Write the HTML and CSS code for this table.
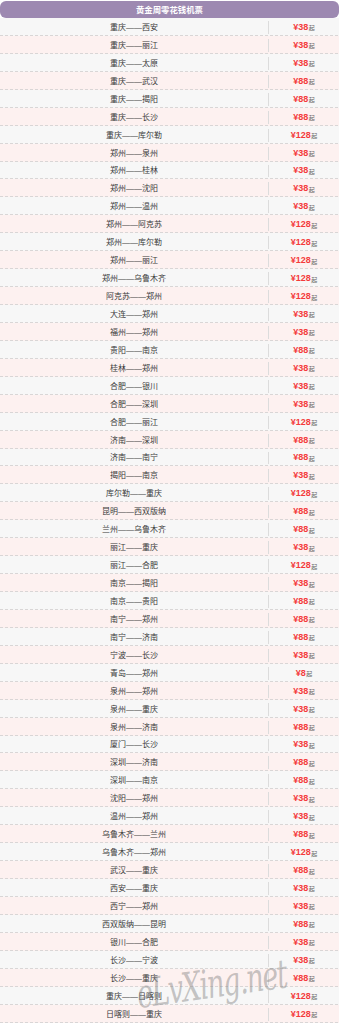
FILE: index.html
```html
<!DOCTYPE html>
<html lang="zh-CN">
<head>
<meta charset="utf-8">
<title>黄金周零花钱机票</title>
<link rel="stylesheet" href="styles.css">
</head>
<body>
<div class="board">
  <div class="title">黄金周零花钱机票</div>
  <ul class="list">
    <li class="row"><span class="route">重庆——西安</span><span class="price"><b>¥38</b><small>起</small></span></li>
    <li class="row"><span class="route">重庆——丽江</span><span class="price"><b>¥38</b><small>起</small></span></li>
    <li class="row"><span class="route">重庆——太原</span><span class="price"><b>¥38</b><small>起</small></span></li>
    <li class="row"><span class="route">重庆——武汉</span><span class="price"><b>¥88</b><small>起</small></span></li>
    <li class="row"><span class="route">重庆——揭阳</span><span class="price"><b>¥88</b><small>起</small></span></li>
    <li class="row"><span class="route">重庆——长沙</span><span class="price"><b>¥88</b><small>起</small></span></li>
    <li class="row"><span class="route">重庆——库尔勒</span><span class="price"><b>¥128</b><small>起</small></span></li>
    <li class="row"><span class="route">郑州——泉州</span><span class="price"><b>¥38</b><small>起</small></span></li>
    <li class="row"><span class="route">郑州——桂林</span><span class="price"><b>¥38</b><small>起</small></span></li>
    <li class="row"><span class="route">郑州——沈阳</span><span class="price"><b>¥38</b><small>起</small></span></li>
    <li class="row"><span class="route">郑州——温州</span><span class="price"><b>¥38</b><small>起</small></span></li>
    <li class="row"><span class="route">郑州——阿克苏</span><span class="price"><b>¥128</b><small>起</small></span></li>
    <li class="row"><span class="route">郑州——库尔勒</span><span class="price"><b>¥128</b><small>起</small></span></li>
    <li class="row"><span class="route">郑州——丽江</span><span class="price"><b>¥128</b><small>起</small></span></li>
    <li class="row"><span class="route">郑州——乌鲁木齐</span><span class="price"><b>¥128</b><small>起</small></span></li>
    <li class="row"><span class="route">阿克苏——郑州</span><span class="price"><b>¥128</b><small>起</small></span></li>
    <li class="row"><span class="route">大连——郑州</span><span class="price"><b>¥38</b><small>起</small></span></li>
    <li class="row"><span class="route">福州——郑州</span><span class="price"><b>¥38</b><small>起</small></span></li>
    <li class="row"><span class="route">贵阳——南京</span><span class="price"><b>¥88</b><small>起</small></span></li>
    <li class="row"><span class="route">桂林——郑州</span><span class="price"><b>¥38</b><small>起</small></span></li>
    <li class="row"><span class="route">合肥——银川</span><span class="price"><b>¥38</b><small>起</small></span></li>
    <li class="row"><span class="route">合肥——深圳</span><span class="price"><b>¥38</b><small>起</small></span></li>
    <li class="row"><span class="route">合肥——丽江</span><span class="price"><b>¥128</b><small>起</small></span></li>
    <li class="row"><span class="route">济南——深圳</span><span class="price"><b>¥88</b><small>起</small></span></li>
    <li class="row"><span class="route">济南——南宁</span><span class="price"><b>¥88</b><small>起</small></span></li>
    <li class="row"><span class="route">揭阳——南京</span><span class="price"><b>¥38</b><small>起</small></span></li>
    <li class="row"><span class="route">库尔勒——重庆</span><span class="price"><b>¥128</b><small>起</small></span></li>
    <li class="row"><span class="route">昆明——西双版纳</span><span class="price"><b>¥88</b><small>起</small></span></li>
    <li class="row"><span class="route">兰州——乌鲁木齐</span><span class="price"><b>¥88</b><small>起</small></span></li>
    <li class="row"><span class="route">丽江——重庆</span><span class="price"><b>¥38</b><small>起</small></span></li>
    <li class="row"><span class="route">丽江——合肥</span><span class="price"><b>¥128</b><small>起</small></span></li>
    <li class="row"><span class="route">南京——揭阳</span><span class="price"><b>¥38</b><small>起</small></span></li>
    <li class="row"><span class="route">南京——贵阳</span><span class="price"><b>¥88</b><small>起</small></span></li>
    <li class="row"><span class="route">南宁——郑州</span><span class="price"><b>¥88</b><small>起</small></span></li>
    <li class="row"><span class="route">南宁——济南</span><span class="price"><b>¥88</b><small>起</small></span></li>
    <li class="row"><span class="route">宁波——长沙</span><span class="price"><b>¥38</b><small>起</small></span></li>
    <li class="row"><span class="route">青岛——郑州</span><span class="price"><b>¥8</b><small>起</small></span></li>
    <li class="row"><span class="route">泉州——郑州</span><span class="price"><b>¥38</b><small>起</small></span></li>
    <li class="row"><span class="route">泉州——重庆</span><span class="price"><b>¥38</b><small>起</small></span></li>
    <li class="row"><span class="route">泉州——济南</span><span class="price"><b>¥88</b><small>起</small></span></li>
    <li class="row"><span class="route">厦门——长沙</span><span class="price"><b>¥38</b><small>起</small></span></li>
    <li class="row"><span class="route">深圳——济南</span><span class="price"><b>¥88</b><small>起</small></span></li>
    <li class="row"><span class="route">深圳——南京</span><span class="price"><b>¥88</b><small>起</small></span></li>
    <li class="row"><span class="route">沈阳——郑州</span><span class="price"><b>¥38</b><small>起</small></span></li>
    <li class="row"><span class="route">温州——郑州</span><span class="price"><b>¥38</b><small>起</small></span></li>
    <li class="row"><span class="route">乌鲁木齐——兰州</span><span class="price"><b>¥88</b><small>起</small></span></li>
    <li class="row"><span class="route">乌鲁木齐——郑州</span><span class="price"><b>¥128</b><small>起</small></span></li>
    <li class="row"><span class="route">武汉——重庆</span><span class="price"><b>¥88</b><small>起</small></span></li>
    <li class="row"><span class="route">西安——重庆</span><span class="price"><b>¥38</b><small>起</small></span></li>
    <li class="row"><span class="route">西宁——郑州</span><span class="price"><b>¥38</b><small>起</small></span></li>
    <li class="row"><span class="route">西双版纳——昆明</span><span class="price"><b>¥88</b><small>起</small></span></li>
    <li class="row"><span class="route">银川——合肥</span><span class="price"><b>¥38</b><small>起</small></span></li>
    <li class="row"><span class="route">长沙——宁波</span><span class="price"><b>¥38</b><small>起</small></span></li>
    <li class="row"><span class="route">长沙——重庆</span><span class="price"><b>¥88</b><small>起</small></span></li>
    <li class="row"><span class="route">重庆——日喀则</span><span class="price"><b>¥128</b><small>起</small></span></li>
    <li class="row"><span class="route">日喀则——重庆</span><span class="price"><b>¥128</b><small>起</small></span></li>
  </ul>
  <div class="watermark">eLvXing.net</div>
</div>
</body>
</html>
```

FILE: styles.css
```css
html, body {
  margin: 0;
  padding: 0;
  background: #ffffff;
}

.board {
  position: relative;
  width: 339px;
  overflow: hidden;
  font-family: "Noto Sans CJK SC", "Noto Sans", sans-serif;
}

.title {
  height: 17px;
  margin-top: 1px;
  line-height: 17px;
  background: #9d89b1;
  border-radius: 6px;
  color: #ffffff;
  font-size: 8.4px;
  font-weight: bold;
  text-align: center;
}

.list {
  list-style: none;
  margin: 0;
  padding: 0;
}

.row {
  display: grid;
  grid-template-columns: 268px 1fr;
  box-sizing: border-box;
  height: 17.95px;
  padding-bottom: 1px;
  background-color: #f7f7f7;
  background-image: repeating-linear-gradient(90deg, #d9d6d6 0 3px, transparent 3px 5px);
  background-size: 100% 1px;
  background-position: left bottom;
  background-repeat: no-repeat;
}

.row:nth-child(even) {
  background-color: #fdf1f0;
}

.route {
  display: flex;
  align-items: center;
  justify-content: center;
  font-family: "Liberation Sans", "Noto Sans CJK SC", sans-serif;
  font-size: 8px;
  color: #3a3a3a;
  white-space: nowrap;
}

.price {
  display: flex;
  align-items: center;
  justify-content: center;
  margin: 3px 0 1px;
  border-left: 1px solid #dcdcdc;
  white-space: nowrap;
}

.price b {
  font-family: "Liberation Sans", "Noto Sans CJK SC", sans-serif;
  font-size: 9px;
  font-weight: bold;
  color: #f43b3b;
  line-height: 1;
}

.price small {
  font-size: 6px;
  color: #666666;
  margin-left: 0.5px;
  margin-top: 2px;
  line-height: 1;
}

.watermark {
  position: absolute;
  left: 140px;
  bottom: 6px;
  font-family: "DejaVu Serif", serif;
  font-style: italic;
  font-size: 40px;
  letter-spacing: -2px;
  color: rgba(130, 130, 130, 0.45);
  transform: rotate(-8deg) scaleX(0.68);
  transform-origin: left bottom;
  white-space: nowrap;
  pointer-events: none;
}
```
